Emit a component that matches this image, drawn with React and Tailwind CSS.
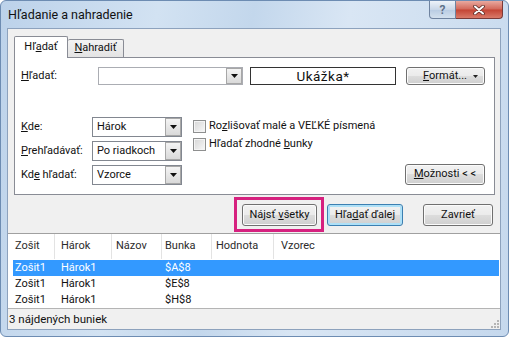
import React from "react";

const btn =
  "flex items-center justify-center rounded-[3px] border border-[#707070] bg-[linear-gradient(#f2f2f2_0%,#ebebeb_48%,#dddddd_50%,#cfcfcf_100%)] shadow-[inset_0_0_0_1px_#fbfbfb]";

function Arrow() {
  return (
    <svg width="7" height="4" viewBox="0 0 7 4">
      <path d="M0 0h7L3.5 4z" fill="#111" />
    </svg>
  );
}

function DropBtn({ h }) {
  return (
    <div
      className={`flex w-[16px] items-center justify-center border border-[#a7a7a7] bg-[linear-gradient(#f4f4f4,#d9d9d9)] ${h}`}
    >
      <Arrow />
    </div>
  );
}

function Select({ value }) {
  return (
    <div className="flex h-[20px] w-[90px] border border-[#828790] bg-white">
      <span className="flex-1 pl-[4px] leading-[18px]">{value}</span>
      <DropBtn h="h-[18px]" />
    </div>
  );
}

function Checkbox({ children }) {
  return (
    <div className="flex h-[18px] items-center">
      <div className="h-[13px] w-[13px] border border-[#8e8f8f] bg-[linear-gradient(135deg,#d6d6d6,#f8f8f8)] shadow-[inset_0_0_0_1px_#f4f4f4]" />
      <span className="ml-[3px]">{children}</span>
    </div>
  );
}

export default function App() {
  const rows = [
    { wb: "Zošit1", sh: "Hárok1", cell: "$A$8", sel: true },
    { wb: "Zošit1", sh: "Hárok1", cell: "$E$8" },
    { wb: "Zošit1", sh: "Hárok1", cell: "$H$8" },
  ];

  return (
    <div className="h-[337px] w-[509px] overflow-hidden bg-white font-['Roboto','Liberation_Sans',sans-serif] text-[11px] text-[#111]">
      <div className="flex h-full flex-col rounded-[6px] border border-[#6d8cb2] bg-[linear-gradient(100deg,#bcd2ea_0%,#d2e2f2_28%,#c3d7ec_45%,#d9e6f4_62%,#c5d8ed_100%)]">
        {/* Title bar */}
        <div className="flex h-[27px] shrink-0">
          <span className="self-center pl-[7px] pt-[2px] text-[12.5px]">Hľadanie a nahradenie</span>
          <div className="ml-auto mr-[5px] flex h-[18px] self-start">
            <div className="flex w-[27px] items-center justify-center rounded-bl-[4px] border border-t-0 border-[#6f83a0] bg-[linear-gradient(#eef3f9,#c9d7e8_50%,#b8cbe2_51%,#d3e0ee)] text-[12px] font-semibold text-[#5d6f87]">
              ?
            </div>
            <div className="flex w-[47px] items-center justify-center rounded-br-[4px] border border-l-0 border-t-0 border-[#7a3a38] bg-[linear-gradient(#e9a99f,#d2685a_48%,#c44434_52%,#d97a69)]">
              <svg width="12" height="10" viewBox="0 0 12 10">
                <path d="M2 1.5l8 7M10 1.5l-8 7" stroke="#5a2a26" strokeWidth="3.6" strokeLinecap="round" />
                <path d="M2 1.5l8 7M10 1.5l-8 7" stroke="#fff" strokeWidth="2" strokeLinecap="round" />
              </svg>
            </div>
          </div>
        </div>

        {/* Content */}
        <div className="mb-[6px] ml-[6px] mr-[7px] flex flex-1 flex-col border border-[#8da2bd] bg-[#f0f0f0]">
          {/* Tabs */}
          <div className="flex h-[28px] items-end pl-[6px] pt-[7px]">
            <div className="relative z-10 -mb-px flex h-[22px] w-[54px] items-center justify-center rounded-t-[2px] border border-b-0 border-[#898c95] bg-white pb-[1px]">
              Hľ<span className="underline">a</span>dať
            </div>
            <div className="flex h-[18px] w-[56px] items-center justify-center rounded-t-[2px] border border-b-0 border-l-0 border-[#898c95] bg-[linear-gradient(#f3f3f3,#e3e3e3)]">
              <span className="underline">N</span>ahradiť
            </div>
          </div>

          {/* Tab panel */}
          <div className="ml-[6px] mr-[5px] border border-[#898c95] bg-white px-[6px] pb-[9px] pt-[9px]">
            <div className="flex h-[18px] items-center">
              <span className="w-[77px]">
                <span className="underline">H</span>ľadať:
              </span>
              <div className="flex h-[18px] w-[145px] border border-[#abadb3] bg-white">
                <div className="flex-1" />
                <DropBtn h="h-[16px]" />
              </div>
              <div className="ml-[7px] flex h-[18px] w-[146px] items-center justify-center border border-[#333] bg-white text-[13.5px] tracking-[0.5px]">
                Ukážka*
              </div>
              <div className={`${btn} ml-[10px] h-[18px] w-[79px] pl-[10px]`}>
                <span className="flex-1 text-center">
                  <span className="underline">F</span>ormát...
                </span>
                <span className="mr-[6px]">
                  <svg width="5" height="3" viewBox="0 0 5 3">
                    <path d="M0 0h5L2.5 3z" fill="#222" />
                  </svg>
                </span>
              </div>
            </div>

            <div className="mt-[32px] flex items-end">
              <div className="flex flex-col gap-[4px]">
                <div className="flex items-center">
                  <span className="w-[71px]">
                    <span className="underline">K</span>de:
                  </span>
                  <Select value="Hárok" />
                </div>
                <div className="flex items-center">
                  <span className="w-[71px]">
                    <span className="underline">P</span>rehľadávať:
                  </span>
                  <Select value="Po riadkoch" />
                </div>
                <div className="flex items-center">
                  <span className="w-[71px]">
                    Kd<span className="underline">e</span> hľadať:
                  </span>
                  <Select value="Vzorce" />
                </div>
              </div>
              <div className="ml-[11px] flex flex-col self-start">
                <Checkbox>
                  Ro<span className="underline">z</span>lišovať malé a VEĽKÉ písmená
                </Checkbox>
                <Checkbox>
                  Hľadať zhodné <span className="underline">b</span>unky
                </Checkbox>
              </div>
              <div className={`${btn} ml-auto mr-[3px] h-[21px] w-[80px]`}>
                <span className="underline">M</span>ožnosti &lt; &lt;
              </div>
            </div>
          </div>

          {/* Buttons */}
          <div className="mt-[9px] flex h-[22px] justify-end pr-[7px]">
            <div className="relative">
              <div className={`${btn} h-[22px] w-[75px]`}>
                Nájsť <span className="ml-[3px] underline">v</span>šetky
              </div>
              <div className="pointer-events-none absolute -bottom-[6px] -left-[8px] -right-[7px] -top-[7px] border-[3px] border-[#d6217f]" />
            </div>
            <div className="ml-[10px] flex h-[22px] w-[76px] items-center justify-center rounded-[3px] border border-[#3c7fb1] bg-[linear-gradient(#f2f2f2_0%,#ebebeb_48%,#dddddd_50%,#cfcfcf_100%)] shadow-[inset_0_0_0_2px_#aee0f7]">
              Hľa<span className="underline">d</span>ať ďalej
            </div>
            <div className={`${btn} ml-[20px] h-[22px] w-[70px]`}>Zavrieť</div>
          </div>

          {/* Results list */}
          <div className="mt-[7px] flex flex-1 flex-col border-t border-[#a0a0a0] bg-white">
            <div className="flex h-[25px] items-center text-[#2b2b2b]">
              <div className="flex h-full w-[47px] items-center border-r border-[#e3e3e3] pl-[7px]">Zošit</div>
              <div className="flex h-full w-[57px] items-center border-r border-[#e3e3e3] pl-[6px]">Hárok</div>
              <div className="flex h-full w-[50px] items-center border-r border-[#e3e3e3] pl-[4px]">Názov</div>
              <div className="flex h-full w-[50px] items-center border-r border-[#e3e3e3] pl-[3px]">Bunka</div>
              <div className="flex h-full w-[62px] items-center border-r border-[#e3e3e3] pl-[4px]">Hodnota</div>
              <div className="flex h-full items-center pl-[7px]">Vzorec</div>
            </div>
            <div className="flex flex-col pt-[1px]">
              {rows.map((r) => (
                <div
                  key={r.cell}
                  className={`ml-[5px] mr-[1px] flex h-[16px] items-center ${r.sel ? "bg-[#3399ff] text-white" : ""}`}
                >
                  <span className="w-[48px] pl-[2px]">{r.wb}</span>
                  <span className="w-[104px]">{r.sh}</span>
                  <span>{r.cell}</span>
                </div>
              ))}
            </div>
          </div>

          {/* Status bar */}
          <div className="flex h-[21px] items-center border-t border-[#b4b4b4] bg-[#f0f0f0] pl-[1px] pt-[1px]">
            <span className="text-[11.5px]">3 nájdených buniek</span>
            <svg className="ml-auto mr-[1px] mt-[8px]" width="8" height="8" viewBox="0 0 8 8">
              <g fill="#b5b5b5">
                <rect x="6" y="0" width="2" height="2" />
                <rect x="3" y="3" width="2" height="2" />
                <rect x="6" y="3" width="2" height="2" />
                <rect x="0" y="6" width="2" height="2" />
                <rect x="3" y="6" width="2" height="2" />
                <rect x="6" y="6" width="2" height="2" />
              </g>
            </svg>
          </div>
        </div>
      </div>
    </div>
  );
}
